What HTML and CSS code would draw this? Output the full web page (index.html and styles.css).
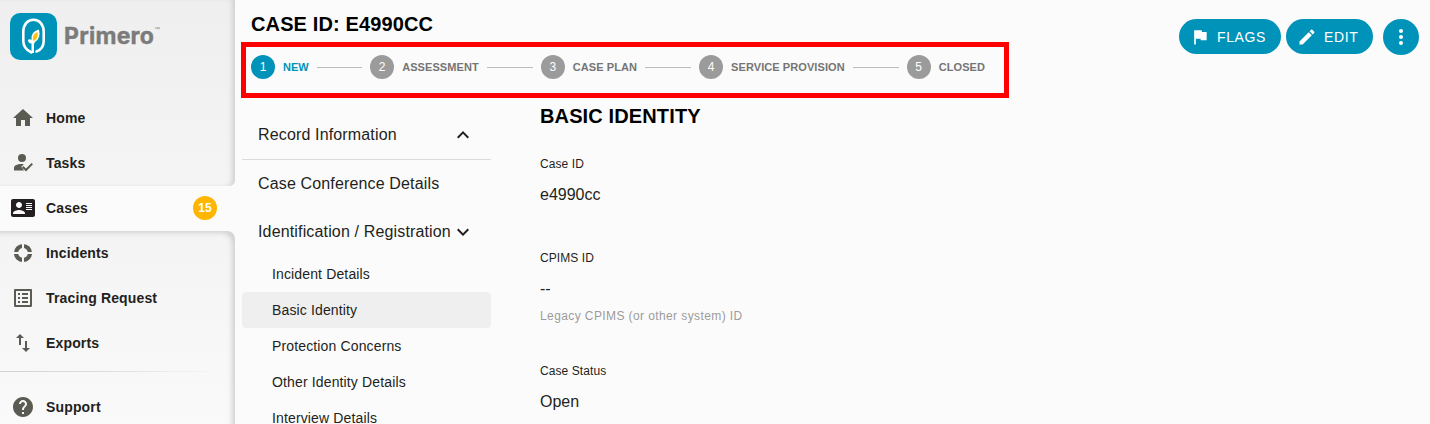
FILE: index.html
```html
<!DOCTYPE html>
<html lang="en">
<head>
<meta charset="utf-8">
<title>Primero</title>
<link rel="stylesheet" href="styles.css">
</head>
<body>
<div class="app">
  <aside class="sidebar">
    <div class="panel panel-top">
      <div class="logo">
        <svg class="logo-mark" viewBox="0 0 47 47" width="47" height="47">
          <rect width="47" height="47" rx="10" fill="#0093ba"/>
          <path d="M21.500 39.500C16 37 13.300 33 13.300 28V19C13.300 11.500 17.500 6.800 23.500 6.800S33.700 11.500 33.700 19V28C33.700 34 30.500 37 26.500 38.500" fill="none" stroke="#fff" stroke-width="2.600" stroke-linecap="round"/>
          <path d="M21.500 40V30.500Q18.500 30.500 17.800 27Q20 25.500 21.500 27Q20.500 18.500 29 16.500Q31 25.500 25 29L24 31V40Z" fill="#fff"/>
          <path d="M23 27.500Q22 21 27.500 19Q28.500 25 25 27.500Z" fill="#ffc20e"/>
        </svg>
        <span class="logo-name">Primero</span><span class="logo-tm">™</span>
      </div>
      <a class="nav-item"><svg class="icon" viewBox="0 0 24 24"><path d="M10 20v-6h4v6h5v-8h3L12 3 2 12h3v8z"/></svg><span>Home</span></a>
      <a class="nav-item"><svg class="icon" viewBox="0 0 24 24"><path d="M11 3a4 4 0 1 1 0 8 4 4 0 0 1 0-8zM3 19.500v-2.500C3 14 7 13 10.500 13c1 0 1.500 0 2.300.2L10.300 15.700 13 19.500zM22 13.200l-7 7.200-4-4 1.400-1.400 2.600 2.600 5.600-5.700z"/></svg><span>Tasks</span></a>
    </div>
    <a class="nav-item active"><svg class="icon" viewBox="0 0 24 24"><path fill-rule="evenodd" d="M22 3H2C.9 3 0 3.900 0 5v14c0 1.100.9 2 2 2h20c1.100 0 2-.9 2-2V5c0-1.100-.9-2-2-2zM8 6c1.660 0 3 1.340 3 3s-1.340 3-3 3-3-1.340-3-3 1.340-3 3-3zm6 12H2v-1c0-2 4-3.100 6-3.100s6 1.100 6 3.100v1zM15 7h6v1h-6zM15 9h6v1h-6zM15 11h6v1h-6zM15 13h6v1h-6z"/></svg><span>Cases</span><b class="count">15</b></a>
    <div class="panel panel-bottom">
      <a class="nav-item"><svg class="icon" viewBox="0 0 24 24"><circle cx="12" cy="12" r="7" fill="none" stroke="#5a5b52" stroke-width="4.200"/><path class="gaps" d="M12 2v7M12 15v7M2 12h7M15 12h7" /></svg><span>Incidents</span></a>
      <a class="nav-item"><svg class="icon" viewBox="0 0 24 24"><path d="M19 5v14H5V5h14m1.100-2H3.900c-.5 0-.9.4-.9.900v16.200c0 .4.4.9.900.9h16.200c.4 0 .9-.5.9-.9V3.900c0-.5-.5-.9-.9-.9zM11 7h6v2h-6V7zm0 4h6v2h-6v-2zm0 4h6v2h-6zM7 7h2v2H7zm0 4h2v2H7zm0 4h2v2H7z"/></svg><span>Tracing Request</span></a>
      <a class="nav-item"><svg class="icon" viewBox="0 0 24 24"><path d="M16 17.010V10h-2v7.010h-3L15 21l4-3.990h-3zM9 3L5 6.990h3V14h2V6.990h3L9 3z"/></svg><span>Exports</span></a>
      <div class="divider"></div>
      <a class="nav-item"><svg class="icon" viewBox="0 0 24 24"><path d="M12 2C6.480 2 2 6.480 2 12s4.480 10 10 10 10-4.480 10-10S17.520 2 12 2zm1 17h-2v-2h2v2zm2.070-7.750l-.9.920C13.450 12.900 13 13.500 13 15h-2v-.5c0-1.100.45-2.100 1.170-2.830l1.240-1.260c.37-.36.59-.86.59-1.410 0-1.100-.9-2-2-2s-2 .9-2 2H8c0-2.210 1.790-4 4-4s4 1.790 4 4c0 .88-.36 1.680-.93 2.250z"/></svg><span>Support</span></a>
    </div>
  </aside>

  <main class="main">
    <header class="header">
      <div class="heading">
        <h1 class="title">CASE ID: E4990CC</h1>
        <div class="stepper">
          <span class="num current">1</span><span class="label current-label">NEW</span><i class="line"></i>
          <span class="num">2</span><span class="label">ASSESSMENT</span><i class="line"></i>
          <span class="num">3</span><span class="label">CASE PLAN</span><i class="line"></i>
          <span class="num">4</span><span class="label">SERVICE PROVISION</span><i class="line"></i>
          <span class="num">5</span><span class="label">CLOSED</span>
        </div>
        <div class="highlight"></div>
      </div>
      <div class="actions">
        <button class="btn flags"><svg viewBox="0 0 24 24"><path d="M14.400 6L14 4H5v17h2v-7h5.600l.4 2h7V6z"/></svg>FLAGS</button>
        <button class="btn edit"><svg viewBox="0 0 24 24"><path d="M3 17.250V21h3.750L17.810 9.940l-3.750-3.750L3 17.250zM20.710 7.040c.39-.39.39-1.020 0-1.410l-2.340-2.340c-.39-.39-1.020-.39-1.410 0l-1.830 1.830 3.750 3.750 1.830-1.830z"/></svg>EDIT</button>
        <button class="more"><svg viewBox="0 0 24 24"><path d="M12 8c1.100 0 2-.9 2-2s-.9-2-2-2-2 .9-2 2 .9 2 2 2zm0 2c-1.100 0-2 .9-2 2s.9 2 2 2 2-.9 2-2-.9-2-2-2zm0 6c-1.100 0-2 .9-2 2s.9 2 2 2 2-.9 2-2-.9-2-2-2z"/></svg></button>
      </div>
    </header>
    <div class="content">
      <nav class="forms">
        <div class="group ruled"><span>Record Information</span><svg class="chevron" viewBox="0 0 24 24"><path d="M7.410 15.410L12 10.830l4.590 4.580L18 14l-6-6-6 6z"/></svg></div>
        <div class="group">Case Conference Details</div>
        <div class="group last"><span>Identification / Registration</span><svg class="chevron" viewBox="0 0 24 24"><path d="M7.410 8.590L12 13.170l4.590-4.580L18 10l-6 6-6-6z"/></svg></div>
        <div class="form">Incident Details</div>
        <div class="form selected">Basic Identity</div>
        <div class="form">Protection Concerns</div>
        <div class="form">Other Identity Details</div>
        <div class="form">Interview Details</div>
      </nav>
      <section class="record">
        <h2 class="title">BASIC IDENTITY</h2>
        <div class="field first"><div class="field-name">Case ID</div><div class="value">e4990cc</div></div>
        <div class="field second"><div class="field-name">CPIMS ID</div><div class="value">--</div><div class="help">Legacy CPIMS (or other system) ID</div></div>
        <div class="field"><div class="field-name">Case Status</div><div class="value">Open</div></div>
      </section>
    </div>
  </main>
</div>
</body>
</html>
```

FILE: styles.css
```css
* { box-sizing: border-box; }
body { margin: 0; background: #fbfbfb; color: #231f20; font-family: "Liberation Sans", Arial, sans-serif; overflow: hidden; }
.app { display: flex; height: 424px; overflow: hidden; }

.sidebar { width: 235px; flex: none; display: flex; flex-direction: column; }
.panel { box-shadow: inset -5px 0 5px -2px #d2d2d2; }
.panel-top { height: 186px; flex: none; background: linear-gradient(#efefef, #f4f4f4); border-bottom-right-radius: 6px; }
.panel-bottom { flex: none; height: 210px; background: linear-gradient(#f4f4f4, #fafafa); border-top-right-radius: 8px; box-shadow: inset -5px 4px 5px -2px #d2d2d2; }
.logo { display: flex; height: 96px; padding: 13px 0 0 10px; }
.logo-name { margin: 7px 0 0 7px; font: 700 23px/32px Inter, sans-serif; letter-spacing: 0.25px; color: #7b7b79; -webkit-text-stroke: 0.4px #7b7b79; }
.logo-tm { margin-top: 12px; font: 6px/8px "Liberation Sans", sans-serif; color: #888; }
.nav-item { display: flex; flex: none; align-items: center; height: 45px; padding: 0 18px 1px 11px; font-size: 14px; font-weight: bold; letter-spacing: 0.15px; }
.icon { width: 24px; height: 24px; margin-right: 11px; fill: #5a5b52; }
.gaps { stroke: #f5f5f5; stroke-width: 2; }
.active .icon { fill: #231f20; }
.count { width: 24px; height: 24px; margin-left: auto; border-radius: 50%; background: #ffb600; color: #fff; font-size: 12px; line-height: 24px; text-align: center; letter-spacing: 0; }
.divider { height: 1px; margin: 5px 15px 13px 0; background: linear-gradient(90deg, #d2d2d2, #dedede 50%, transparent); }

.main { flex: 1; }
.header { display: flex; justify-content: space-between; height: 98px; padding: 0 11px 0 16px; }
.heading { position: relative; }
.title { margin: 0; font-size: 20px; line-height: 24px; letter-spacing: 0.13px; color: #000; white-space: nowrap; }
.heading .title { padding-top: 12px; }
.stepper { display: flex; align-items: center; gap: 8px; margin-top: 19px; }
.num { width: 24px; height: 24px; border-radius: 50%; background: #9b9b9b; color: #fff; font-size: 12px; line-height: 24px; text-align: center; }
.current { background: #0093ba; }
.label { font-size: 11px; font-weight: bold; letter-spacing: 0.08px; color: #757575; white-space: nowrap; }
.current-label { color: #0093ba; letter-spacing: 0; }
.line { width: 46px; height: 1px; background: #bdbdbd; }
.current-label + .line { width: 45.5px; }
.highlight { position: absolute; left: -10px; top: 42px; width: 768px; height: 56px; border: 5px solid #f00; }
.actions { display: flex; padding-top: 19px; }
.btn, .more { display: flex; align-items: center; padding: 0; border: 0; background: #0093ba; color: #fff; }
.btn { height: 35px; border-radius: 18px; font: 14px "Liberation Sans", sans-serif; letter-spacing: 0.6px; }
.btn svg, .more svg { width: 20px; height: 20px; fill: #fff; }
.flags { width: 102px; margin-right: 5px; padding-left: 11px; }
.flags svg { margin-right: 7px; }
.edit { width: 87px; margin-right: 10px; padding-left: 11px; }
.edit svg { margin-right: 7px; }
.more { width: 36px; height: 36px; border-radius: 50%; justify-content: center; }
.more svg { width: 24px; height: 24px; }

.content { display: flex; padding-left: 7px; }
.forms { width: 249px; padding-top: 12px; }
.group { display: flex; justify-content: space-between; align-items: center; height: 48px; padding: 0 16px; font-size: 16px; letter-spacing: 0.15px; white-space: nowrap; }
.ruled { height: 50px; border-bottom: 1px solid #dcdcdc; }
.chevron { width: 24px; height: 24px; fill: #231f20; flex: none; }
.form { height: 36px; padding-left: 30px; font-size: 14px; line-height: 36px; letter-spacing: 0.14px; border-radius: 4px; }
.selected { background: #efefef; }
.record { padding: 6px 0 0 49px; }
.field { height: 94px; }
.first { margin-top: 27px; }
.second { height: 113px; }
.field-name { font-size: 12px; line-height: 18px; letter-spacing: 0.08px; }
.value { padding-top: 10px; font-size: 16px; line-height: 24px; }
.help { font-size: 12px; line-height: 18px; padding-top: 6px; letter-spacing: 0.4px; color: #9b9b9b; }
```
